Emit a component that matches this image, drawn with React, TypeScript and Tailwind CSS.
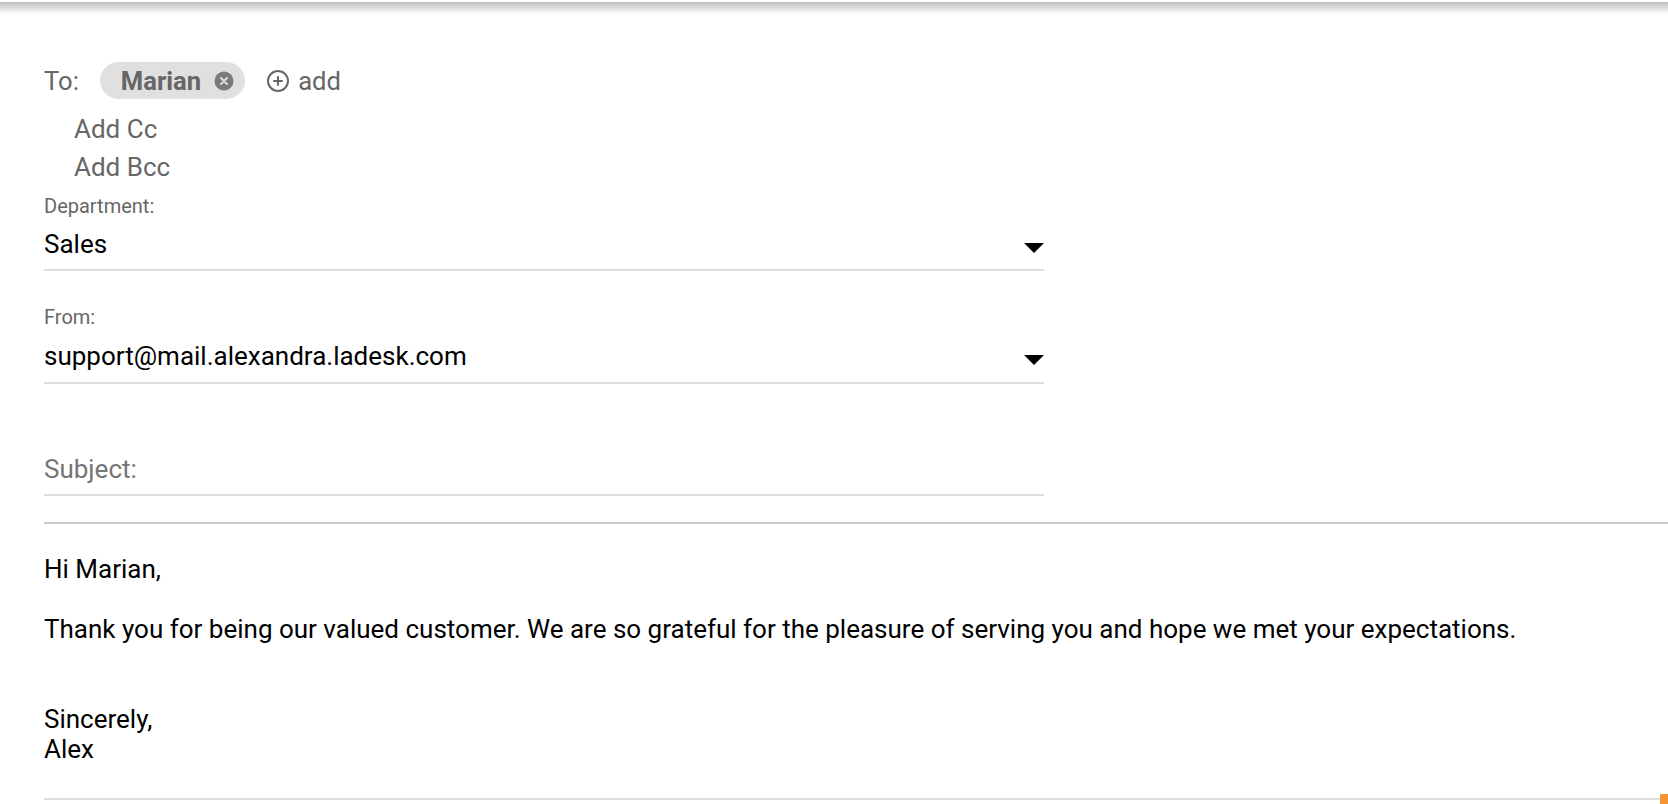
import React from 'react';
import { CirclePlus } from 'lucide-react';

const Caret = () => (
  <svg width="20" height="10" viewBox="0 0 20 10" className="mt-[14px] shrink-0">
    <polygon points="0,0 20,0 10,10" fill="#000" />
  </svg>
);

export default function App() {
  return (
    <div className="h-[804px] w-full overflow-hidden bg-white font-['Roboto',sans-serif]">
      {/* top shadow */}
      <div className="mt-[2px] h-[12px] bg-linear-to-b from-[#bdbdbd] to-white" />

      <div className="pl-[44px]">
        {/* To row */}
        <div className="mt-[48px] flex h-[37px] items-center text-[25.6px] leading-[30px] text-[#666]">
          <span>To:</span>
          <span className="ml-[21px] flex h-[37px] items-center rounded-full bg-[#e0e0e0] pl-[21px] pr-[11px]">
            <span className="font-bold">Marian</span>
            <svg width="20" height="20" viewBox="0 0 20 20" className="ml-[13px]">
              <circle cx="10" cy="10" r="9.5" fill="#7a7a7a" />
              <path d="M7 7 L13 13 M13 7 L7 13" stroke="#e4e4e4" strokeWidth="1.8" strokeLinecap="round" />
            </svg>
          </span>
          <CirclePlus size={24} strokeWidth={2} className="ml-[21px] text-[#666]" />
          <span className="ml-[8px]">add</span>
        </div>

        <div className="mt-[11px] pl-[30px] text-[26px] leading-[38px] text-[#666]">
          <div>Add Cc</div>
          <div>Add Bcc</div>
        </div>

        {/* Department */}
        <div className="mt-[8px] text-[20px] leading-[24px] text-[#666]">Department:</div>
        <div className="mt-[11px] flex w-[1000px] items-start justify-between border-b-2 border-[#dddddd] pb-[10px] text-[26px] leading-[30px] text-black">
          <span>Sales</span>
          <Caret />
        </div>

        {/* From */}
        <div className="mt-[34px] text-[20px] leading-[24px] text-[#666]">From:</div>
        <div className="mt-[12px] flex w-[1000px] items-start justify-between border-b-2 border-[#dddddd] pb-[11px] text-[26px] leading-[30px] text-black">
          <span>support@mail.alexandra.ladesk.com</span>
          <Caret />
        </div>

        {/* Subject */}
        <div className="mt-[70px] w-[1000px] border-b-2 border-[#dddddd] pb-[10px] text-[26px] leading-[30px] text-[#757575]">
          Subject:
        </div>

        <div className="mt-[26px] h-[2px] bg-[#cccccc]" />

        {/* Body */}
        <div className="mt-[30px] text-[26px] leading-[30px] text-black">
          <div>Hi Marian,</div>
          <div><br /></div>
          <div>Thank you for being our valued customer. We are so grateful for the pleasure of serving you and hope we met your expectations.</div>
          <div><br /></div>
          <div><br /></div>
          <div>Sincerely,</div>
          <div>Alex</div>
        </div>

        <div className="mt-[30px] flex h-[10px] items-start">
          <div className="mt-[4px] h-[2px] flex-1 bg-[#dddddd]" />
          <div className="h-[10px] w-[8px] bg-[#f39433]" />
        </div>
      </div>
    </div>
  );
}
